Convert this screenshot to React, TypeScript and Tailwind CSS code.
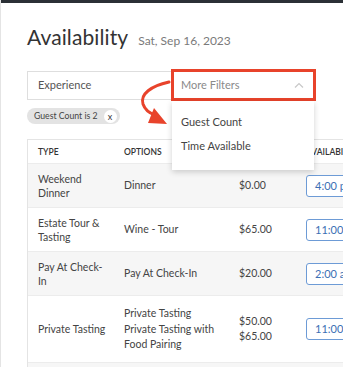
import React from 'react'

type Row = {
	type: string
	options: string[]
	prices: string[]
	time: string
	shaded: boolean
	height: string
}

const rows: Row[] = [
	{ type: 'Weekend Dinner', options: ['Dinner'], prices: ['$0.00'], time: '4:00 pm', shaded: true, height: 'h-[44px]' },
	{ type: 'Estate Tour & Tasting', options: ['Wine - Tour'], prices: ['$65.00'], time: '11:00 am', shaded: false, height: 'h-[44px]' },
	{ type: 'Pay At Check-In', options: ['Pay At Check-In'], prices: ['$20.00'], time: '2:00 am', shaded: true, height: 'h-[44px]' },
	{
		type: 'Private Tasting',
		options: ['Private Tasting', 'Private Tasting with Food Pairing'],
		prices: ['$50.00', '$65.00'],
		time: '11:00 am',
		shaded: false,
		height: 'h-[67px]',
	},
]

const ChevronUp = () => (
	<svg width="10" height="6" viewBox="0 0 10 6" fill="none">
		<path d="M1 5.5 L5 1.5 L9 5.5" stroke="#c8c8c8" strokeWidth="1.2" />
	</svg>
)

const App = () => {
	return (
		<div className="relative w-[343px] h-[367px] overflow-hidden bg-white border-l border-[#e4e4e4] font-['Lato',sans-serif] text-[#444]">
			<div className="h-[3px] bg-[#2b3036]" />
			<div className="pl-[26px] pt-[21px]">
				<div className="flex items-baseline gap-[10px]">
					<h1 className="text-[21px] leading-[26px] text-[#333] tracking-[0.1px]">Availability</h1>
					<span className="text-[12px] text-[#7a7a7a]">Sat, Sep 16, 2023</span>
				</div>

				<div className="mt-[19px] flex items-center">
					<div className="w-[146px] h-[29px] border border-[#dedede] bg-white flex items-center pl-[10px] text-[11px] text-[#555]">
						Experience
					</div>
					<div className="relative -ml-[2px]">
						<div className="w-[145px] h-[32px] border-[3px] border-[#e8432b] bg-white flex items-center justify-between pl-[7px] pr-[9px] text-[11px] text-[#8a8a8a]">
							<span>More Filters</span>
							<ChevronUp />
						</div>
						<div className="absolute z-10 left-[1px] top-[32px] w-[142px] h-[69px] bg-white shadow-[0_2px_6px_rgba(0,0,0,0.18)] flex flex-col pl-[9px] pt-[14px] gap-[11px] text-[11px] leading-[13px] text-[#444]">
							<span>Guest Count</span>
							<span>Time Available</span>
						</div>
					</div>
				</div>

				<div className="mt-[7px] inline-flex items-center h-[16px] rounded-full bg-[#e3e3e3] pl-[7px] pr-[3px] gap-[6px] text-[8.7px] text-[#444]">
					<span>Guest Count is 2</span>
					<span className="w-[13px] h-[13px] rounded-full bg-white flex items-center justify-center text-[9px] leading-none text-[#333]">
						x
					</span>
				</div>

				<div className="mt-[14px] w-[420px] border-l border-t border-[#e4e4e4]">
					<div className="grid grid-cols-[86px_115px_67px_152px] h-[24px] items-center text-[8.5px] font-semibold text-[#333] border-b border-[#ececec]">
						<span className="pl-[10px]">TYPE</span>
						<span className="pl-[10px]">OPTIONS</span>
						<span className="pl-[10px]">PRICE</span>
						<span className="pl-[10px]">AVAILABILITY</span>
					</div>
					{rows.map(row => (
						<div
							key={row.type}
							className={`grid grid-cols-[86px_115px_67px_152px] items-center text-[10.5px] border-b border-[#ececec] ${row.height} ${row.shaded ? 'bg-[#f6f6f6]' : 'bg-white'}`}
						>
							<span className="pl-[10px] pr-[8px] leading-[14px]">{row.type}</span>
							<div className="pl-[10px] pr-[8px] leading-[15.5px]">
								{row.options.map(o => (
									<div key={o}>{o}</div>
								))}
							</div>
							<div className="pl-[10px] leading-[15px]">
								{row.prices.map(p => (
									<div key={p}>{p}</div>
								))}
							</div>
							<div className="pl-[10px]">
								<span className="inline-flex items-center h-[22px] px-[8px] rounded-[3px] border border-[#6d9bd6] text-[11px] text-[#3b6fb4] bg-white">
									{row.time}
								</span>
							</div>
						</div>
					))}
					<div className="h-[20px] bg-[#f6f6f6]" />
				</div>
			</div>

			<svg className="absolute left-0 top-0 pointer-events-none" width="343" height="367" viewBox="0 0 343 367">
				<path
					d="M168 82 C150 86, 139 94, 142 104 C144 110, 148 113, 154 115"
					stroke="#e8432b"
					strokeWidth="3"
					fill="none"
					strokeLinecap="round"
				/>
				<polygon points="153,108 166,124 147,123" fill="#e8432b" />
			</svg>
		</div>
	)
}

export default App
